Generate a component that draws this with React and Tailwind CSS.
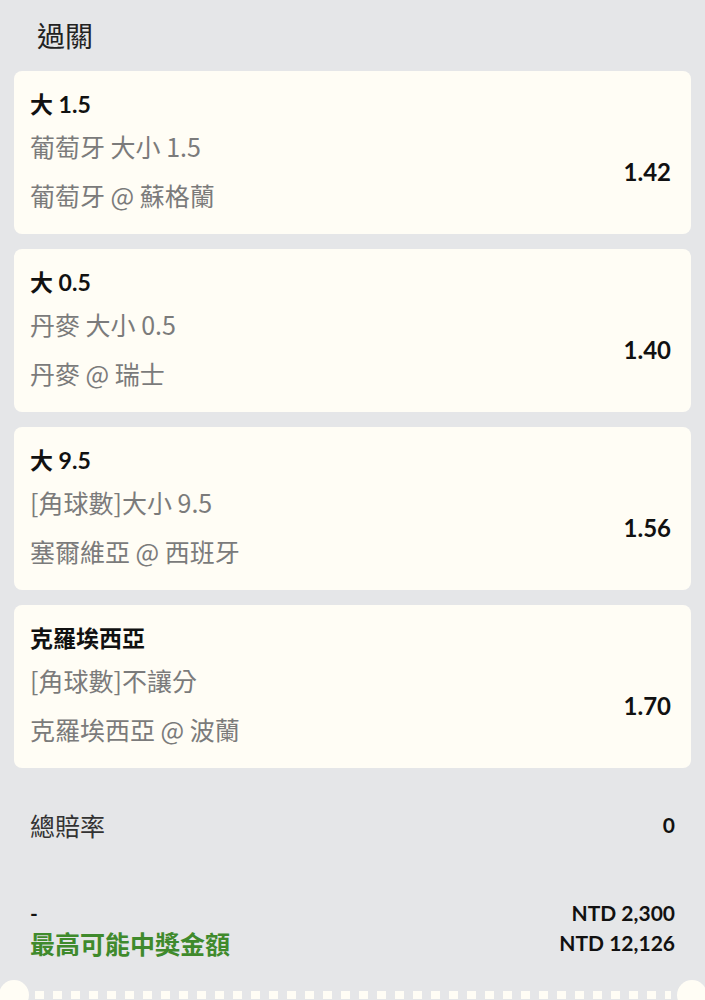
import React from "react";

const bets = [
  { pick: "大 1.5", market: "葡萄牙 大小 1.5", match: "葡萄牙 @ 蘇格蘭", odds: "1.42" },
  { pick: "大 0.5", market: "丹麥 大小 0.5", match: "丹麥 @ 瑞士", odds: "1.40" },
  { pick: "大 9.5", market: "[角球數]大小 9.5", match: "塞爾維亞 @ 西班牙", odds: "1.56" },
  { pick: "克羅埃西亞", market: "[角球數]不讓分", match: "克羅埃西亞 @ 波蘭", odds: "1.70" },
];

const cjk = { fontFamily: '"Noto Sans CJK TC", "Noto Sans", sans-serif' };

function BetCard({ bet }) {
  return (
    <div className="bg-[#fffdf5] rounded-[8px] pl-4 pr-5 pt-[18px] pb-[21px]">
      <div className="text-[23px] leading-[30px] font-bold text-[#111]">{bet.pick}</div>
      <div className="flex items-center justify-between mt-[9px]">
        <div className="text-[25px] text-[#7b7b7b]" style={cjk}>
          <div className="leading-[36px]">{bet.market}</div>
          <div className="leading-[36px] mt-[13px]">{bet.match}</div>
        </div>
        <div className="text-[24px] font-bold text-[#111] pt-[2px]">{bet.odds}</div>
      </div>
    </div>
  );
}

export default function App() {
  return (
    <div
      className="min-h-[1000px] bg-[#e5e6e8] overflow-hidden"
      style={{ fontFamily: 'Lato, "Noto Sans CJK TC", sans-serif' }}
    >
      <div className="pt-4 pl-[37px] text-[28px] leading-[40px] text-[#222]">過關</div>

      <div className="px-[14px] mt-[15px] flex flex-col gap-[15px]">
        {bets.map((b, i) => (
          <BetCard key={i} bet={b} />
        ))}
      </div>

      <div className="px-[30px] mt-[39px] flex items-center justify-between">
        <span className="text-[25px] leading-[36px] text-[#333]" style={cjk}>總賠率</span>
        <span className="text-[21px] font-bold text-[#111]">0</span>
      </div>

      <div className="px-[30px] mt-[55px] grid grid-cols-[1fr_auto]">
        <span className="text-[21px] leading-[30px] font-bold text-[#111]">-</span>
        <span className="text-[21px] leading-[30px] font-bold text-[#111] text-right">NTD 2,300</span>
        <span className="text-[25px] leading-[30px] font-bold text-[#3f8a2c]" style={cjk}>最高可能中獎金額</span>
        <span className="text-[21px] leading-[30px] font-bold text-[#111] text-right">NTD 12,126</span>
      </div>

      <div className="mt-[22px] flex items-start">
        <div className="w-[30px] h-[30px] rounded-full bg-[#fffdf5] -ml-[1px] shrink-0" />
        <div className="flex-1 mt-[11px] mx-[6px] h-[8px] bg-[repeating-linear-gradient(90deg,#fffdf5_0_9px,transparent_9px_18px)]" />
        <div className="w-[30px] h-[30px] rounded-full bg-[#fffdf5] -mr-[2px] shrink-0" />
      </div>
    </div>
  );
}
